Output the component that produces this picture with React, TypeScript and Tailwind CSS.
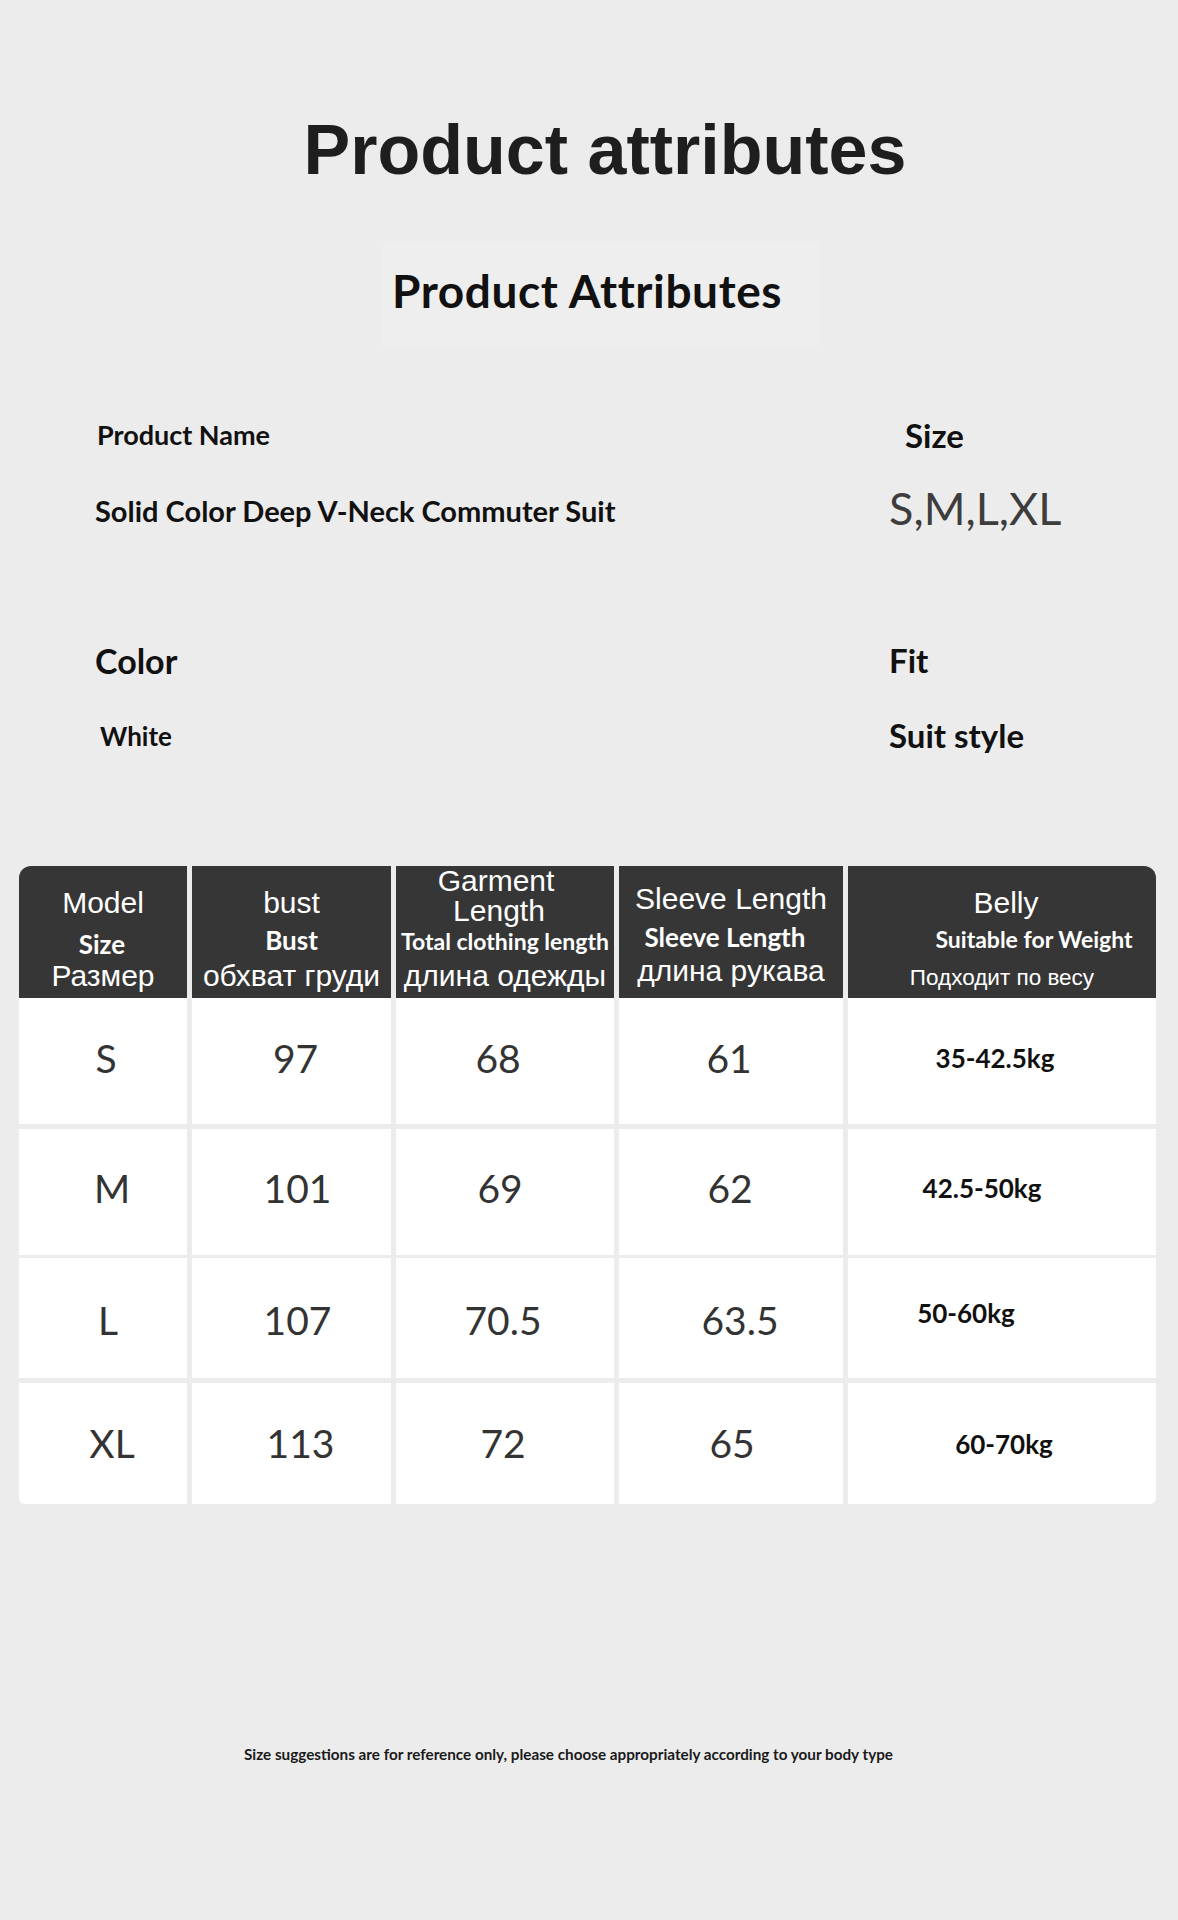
const ARIAL = "font-['Liberation_Sans',Arial,sans-serif]";
const LATO = "font-['Lato',sans-serif]";

type Line = { t: string; c: string };
type HeadCell = { cls: string; lines: Line[] };

const a30 = `${ARIAL} text-[30px] leading-none`;

const headCells: HeadCell[] = [
  {
    cls: 'rounded-tl-[12px] pt-[22px]',
    lines: [
      { t: 'Model', c: a30 },
      { t: 'Size', c: `${LATO} font-bold text-[26px] leading-none mt-[13px] pr-[2px]` },
      { t: 'Размер', c: `${a30} mt-[4px]` },
    ],
  },
  {
    cls: 'pt-[22px]',
    lines: [
      { t: 'bust', c: a30 },
      { t: 'Bust', c: `${LATO} font-bold text-[26px] leading-none mt-[9px]` },
      { t: 'обхват груди', c: `${a30} mt-[8px]` },
    ],
  },
  {
    cls: 'pt-0',
    lines: [
      { t: 'Garment', c: `${a30} pr-[18px]` },
      { t: 'Length', c: `${a30} pr-[12px]` },
      { t: 'Total clothing length', c: `${LATO} font-bold text-[23px] leading-none mt-[4px]` },
      { t: 'длина одежды', c: `${a30} mt-[8px]` },
    ],
  },
  {
    cls: 'pt-[18px]',
    lines: [
      { t: 'Sleeve Length', c: a30 },
      { t: 'Sleeve Length', c: `${LATO} font-bold text-[26px] leading-none mt-[10px] pr-[12px]` },
      { t: 'длина рукава', c: `${a30} mt-[6px]` },
    ],
  },
  {
    cls: 'rounded-tr-[12px] pt-[22px]',
    lines: [
      { t: 'Belly', c: `${a30} pl-[8px]` },
      { t: 'Suitable for Weight', c: `${LATO} font-bold text-[23px] leading-none mt-[10px] pl-[64px]` },
      { t: 'Подходит по весу', c: `${ARIAL} text-[22.5px] leading-none mt-[16px]` },
    ],
  },
];

type Row = {
  h: string;
  gap: string;
  pad: string;
  cells: Line[];
  weight: Line;
  last?: boolean;
};

const rows: Row[] = [
  {
    h: 'h-[126px]',
    gap: 'mt-0',
    pad: 'pb-[6px]',
    cells: [
      { t: 'S', c: 'pl-[6px]' },
      { t: '97', c: 'pl-[8px]' },
      { t: '68', c: 'pr-[14px]' },
      { t: '61', c: 'pr-[4px]' },
    ],
    weight: { t: '35-42.5kg', c: 'pr-[14px]' },
  },
  {
    h: 'h-[126px]',
    gap: 'mt-[5px]',
    pad: 'pb-[8px]',
    cells: [
      { t: 'M', c: 'pl-[18px]' },
      { t: '101', c: 'pl-[12px]' },
      { t: '69', c: 'pr-[10px]' },
      { t: '62', c: 'pr-[2px]' },
    ],
    weight: { t: '42.5-50kg', c: 'pr-[40px]' },
  },
  {
    h: 'h-[120px]',
    gap: 'mt-[3px]',
    pad: 'pt-[4px]',
    cells: [
      { t: 'L', c: 'pl-[10px]' },
      { t: '107', c: 'pl-[12px]' },
      { t: '70.5', c: 'pr-[4px]' },
      { t: '63.5', c: 'pl-[18px]' },
    ],
    weight: { t: '50-60kg', c: 'pr-[72px] pb-[14px]' },
  },
  {
    h: 'h-[121px]',
    gap: 'mt-[5px]',
    pad: 'pt-0',
    cells: [
      { t: 'XL', c: 'pl-[18px]' },
      { t: '113', c: 'pl-[18px]' },
      { t: '72', c: 'pr-[4px]' },
      { t: '65', c: 'pl-[2px]' },
    ],
    weight: { t: '60-70kg', c: 'pl-[4px]' },
    last: true,
  },
];

function FieldRow({
  left,
  right,
  top,
}: {
  left: Line;
  right: Line;
  top: string;
}) {
  return (
    <div className={`flex items-start pl-[94px] ${top}`}>
      <div className="w-[795px] shrink-0">
        <div className={left.c}>{left.t}</div>
      </div>
      <div className={right.c}>{right.t}</div>
    </div>
  );
}

export default function App() {
  return (
    <div className="w-[1178px] h-[1920px] bg-[#ececec] flex flex-col overflow-hidden">
      {/* Page title */}
      <div className="pt-[115px] pl-[32px] flex justify-center">
        <h1 className={`${ARIAL} font-bold text-[70px] leading-none text-[#1e1e1e] whitespace-nowrap`}>
          Product attributes
        </h1>
      </div>

      {/* Subtitle block */}
      <div className="mt-[57px] ml-[382px] w-[438px] h-[106px] bg-[#eeeeee] rounded-[6px] pt-[26px] pl-[10px]">
        <h2 className={`${LATO} font-bold text-[46px] tracking-[0.6px] leading-none text-[#111] whitespace-nowrap`}>
          Product Attributes
        </h2>
      </div>

      {/* Attribute fields */}
      <FieldRow
        top="mt-[71px]"
        left={{ t: 'Product Name', c: `${LATO} font-bold text-[27px] leading-none text-[#111] mt-[2px] ml-[3px]` }}
        right={{ t: 'Size', c: `${LATO} font-bold text-[33px] leading-none text-[#111] ml-[16px]` }}
      />
      <FieldRow
        top="mt-[34px]"
        left={{ t: 'Solid Color Deep V-Neck Commuter Suit', c: `${LATO} font-bold text-[29px] leading-none text-[#111] mt-[10px] ml-[1px] whitespace-nowrap` }}
        right={{ t: 'S,M,L,XL', c: `${LATO} text-[45px] leading-none text-[#3d3d3d]` }}
      />
      <FieldRow
        top="mt-[113px]"
        left={{ t: 'Color', c: `${LATO} font-bold text-[34px] leading-none text-[#111] ml-[1px]` }}
        right={{ t: 'Fit', c: `${LATO} font-bold text-[33px] leading-none text-[#111]` }}
      />
      <FieldRow
        top="mt-[41px]"
        left={{ t: 'White', c: `${LATO} font-bold text-[26px] leading-none text-[#111] mt-[4px] ml-[6px]` }}
        right={{ t: 'Suit style', c: `${LATO} font-bold text-[33px] leading-none text-[#111]` }}
      />

      {/* Size table */}
      <div className="mt-[114px] ml-[19px] w-[1137px]">
        <div className="grid grid-cols-[168px_199px_218px_224px_308px] gap-x-[5px] h-[132px]">
          {headCells.map((h, i) => (
            <div key={i} className={`bg-[#363636] text-white flex flex-col items-center ${h.cls}`}>
              {h.lines.map((l, j) => (
                <div key={j} className={`whitespace-nowrap ${l.c}`}>
                  {l.t}
                </div>
              ))}
            </div>
          ))}
        </div>

        {rows.map((r, i) => (
          <div
            key={i}
            className={`grid grid-cols-[168px_199px_218px_224px_308px] gap-x-[5px] ${r.h} ${r.gap}`}
          >
            {r.cells.map((c, j) => (
              <div
                key={j}
                className={`bg-white flex items-center justify-center ${r.pad} ${r.last && j === 0 ? 'rounded-bl-[6px]' : ''}`}
              >
                <span className={`${LATO} text-[39px] leading-none text-[#333] ${c.c}`}>{c.t}</span>
              </div>
            ))}
            <div className={`bg-white flex items-center justify-center ${r.pad} ${r.last ? 'rounded-br-[6px]' : ''}`}>
              <span className={`${LATO} font-bold text-[26px] leading-none text-[#111] ${r.weight.c}`}>
                {r.weight.t}
              </span>
            </div>
          </div>
        ))}
      </div>

      {/* Footnote */}
      <div className="mt-[243px] flex justify-center pr-[41px]">
        <p className={`${LATO} font-bold text-[15.25px] leading-none text-[#1a1a1a] whitespace-nowrap`}>
          Size suggestions are for reference only, please choose appropriately according to your body type
        </p>
      </div>
    </div>
  );
}
